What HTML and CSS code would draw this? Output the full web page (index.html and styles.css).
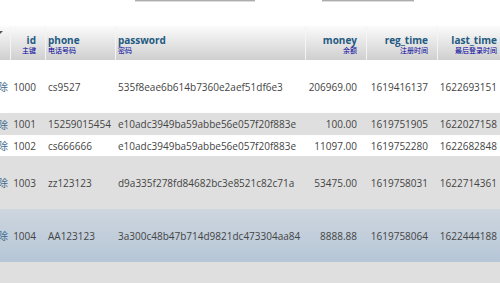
FILE: index.html
```html
<!DOCTYPE html>
<html lang="zh">
<head>
<meta charset="utf-8">
<title>users</title>
<link rel="stylesheet" href="styles.css">
</head>
<body>
<div class="top">
  <span class="btn b1"></span>
  <span class="btn b2"></span>
</div>
<div class="grid-wrap">
  <div class="row head">
    <div class="cell act"><span class="mark"></span></div>
    <div class="cell r">id<span class="cm">主键</span></div>
    <div class="cell l">phone<span class="cm">电话号码</span></div>
    <div class="cell l">password<span class="cm">密码</span></div>
    <div class="cell r">money<span class="cm">余额</span></div>
    <div class="cell r">reg_time<span class="cm">注册时间</span></div>
    <div class="cell r">last_time<span class="cm">最后登录时间</span></div>
  </div>
  <div class="row tall odd">
    <div class="cell act">删除</div>
    <div class="cell r">1000</div>
    <div class="cell l">cs9527</div>
    <div class="cell l">535f8eae6b614b7360e2aef51df6e3</div>
    <div class="cell r">206969.00</div>
    <div class="cell r">1619416137</div>
    <div class="cell r">1622693151</div>
  </div>
  <div class="row s22 even">
    <div class="cell act">删除</div>
    <div class="cell r">1001</div>
    <div class="cell l">15259015454</div>
    <div class="cell l">e10adc3949ba59abbe56e057f20f883e</div>
    <div class="cell r">100.00</div>
    <div class="cell r">1619751905</div>
    <div class="cell r">1622027158</div>
  </div>
  <div class="row s21 odd">
    <div class="cell act">删除</div>
    <div class="cell r">1002</div>
    <div class="cell l">cs666666</div>
    <div class="cell l">e10adc3949ba59abbe56e057f20f883e</div>
    <div class="cell r">11097.00</div>
    <div class="cell r">1619752280</div>
    <div class="cell r">1622682848</div>
  </div>
  <div class="row tall even">
    <div class="cell act">删除</div>
    <div class="cell r">1003</div>
    <div class="cell l">zz123123</div>
    <div class="cell l">d9a335f278fd84682bc3e8521c82c71a</div>
    <div class="cell r">53475.00</div>
    <div class="cell r">1619758031</div>
    <div class="cell r">1622714361</div>
  </div>
  <div class="row tall hover">
    <div class="cell act">删除</div>
    <div class="cell r">1004</div>
    <div class="cell l">AA123123</div>
    <div class="cell l">3a300c48b47b714d9821dc473304aa84</div>
    <div class="cell r">8888.88</div>
    <div class="cell r">1619758064</div>
    <div class="cell r">1622444188</div>
  </div>
  <div class="row tail even"></div>
</div>
</body>
</html>
```
FILE: styles.css
```css
html, body {
  margin: 0;
  padding: 0;
  background: #fff;
  overflow: hidden;
  width: 500px;
  height: 283px;
}
body {
  font-family: "Open Sans", "Noto Sans CJK SC", sans-serif;
  font-size: 10px;
  color: #444;
}
.top {
  height: 26px;
  display: flex;
  align-items: flex-start;
}
.btn {
  display: block;
  height: 1px;
  background: #acacac;
  border-bottom: 1px solid #dedede;
}
.b1 { margin-left: 135px; width: 120px; }
.b2 { margin-left: 67px; width: 92px; }

.grid-wrap {
  margin-left: -30px;
  width: 536px;
}
.row {
  display: grid;
  grid-template-columns: 40px 35px 70px 190px 61px 71px 69px;
  align-items: center;
}
.row.head {
  height: 34px;
  background: linear-gradient(#fbfbfb, #cfcfcf);
  align-items: stretch;
}
.row.tall { height: 53px; }
.row.s22 { height: 22px; }
.row.s21 { height: 21px; }
.row.tail { height: 30px; }
.odd { background: #fff; }
.even { background: #dfdfdf; }
.hover { background: linear-gradient(#ced6df, #b6c6d7); }

.cell {
  box-sizing: border-box;
  white-space: nowrap;
  overflow: hidden;
}
.cell.l { padding-left: 3px; }
.cell.r { text-align: right; padding-right: 9px; }
.cell.act {
  text-align: right;
  padding-right: 2px;
  color: #3d6a8f;
}
.head .cell {
  display: flex;
  flex-direction: column;
  justify-content: center;
  padding-top: 2px;
  font-weight: bold;
  color: #235a81;
  line-height: 12px;
  border-left: 1px solid #f4f4f4;
}
.head .cell.l { padding-left: 2px; }
.head .cell.r { align-items: flex-end; }
.head .cell.act { border-left: 0; position: relative; }
.cm {
  display: block;
  font-family: "Noto Sans CJK SC", sans-serif;
  font-size: 7px;
  line-height: 9px;
  font-weight: normal;
  color: #000099;
}
.mark {
  position: absolute;
  left: 30px;
  top: 5px;
  width: 0;
  height: 0;
  border-top: 3px solid #555;
  border-right: 3px solid transparent;
}
```
